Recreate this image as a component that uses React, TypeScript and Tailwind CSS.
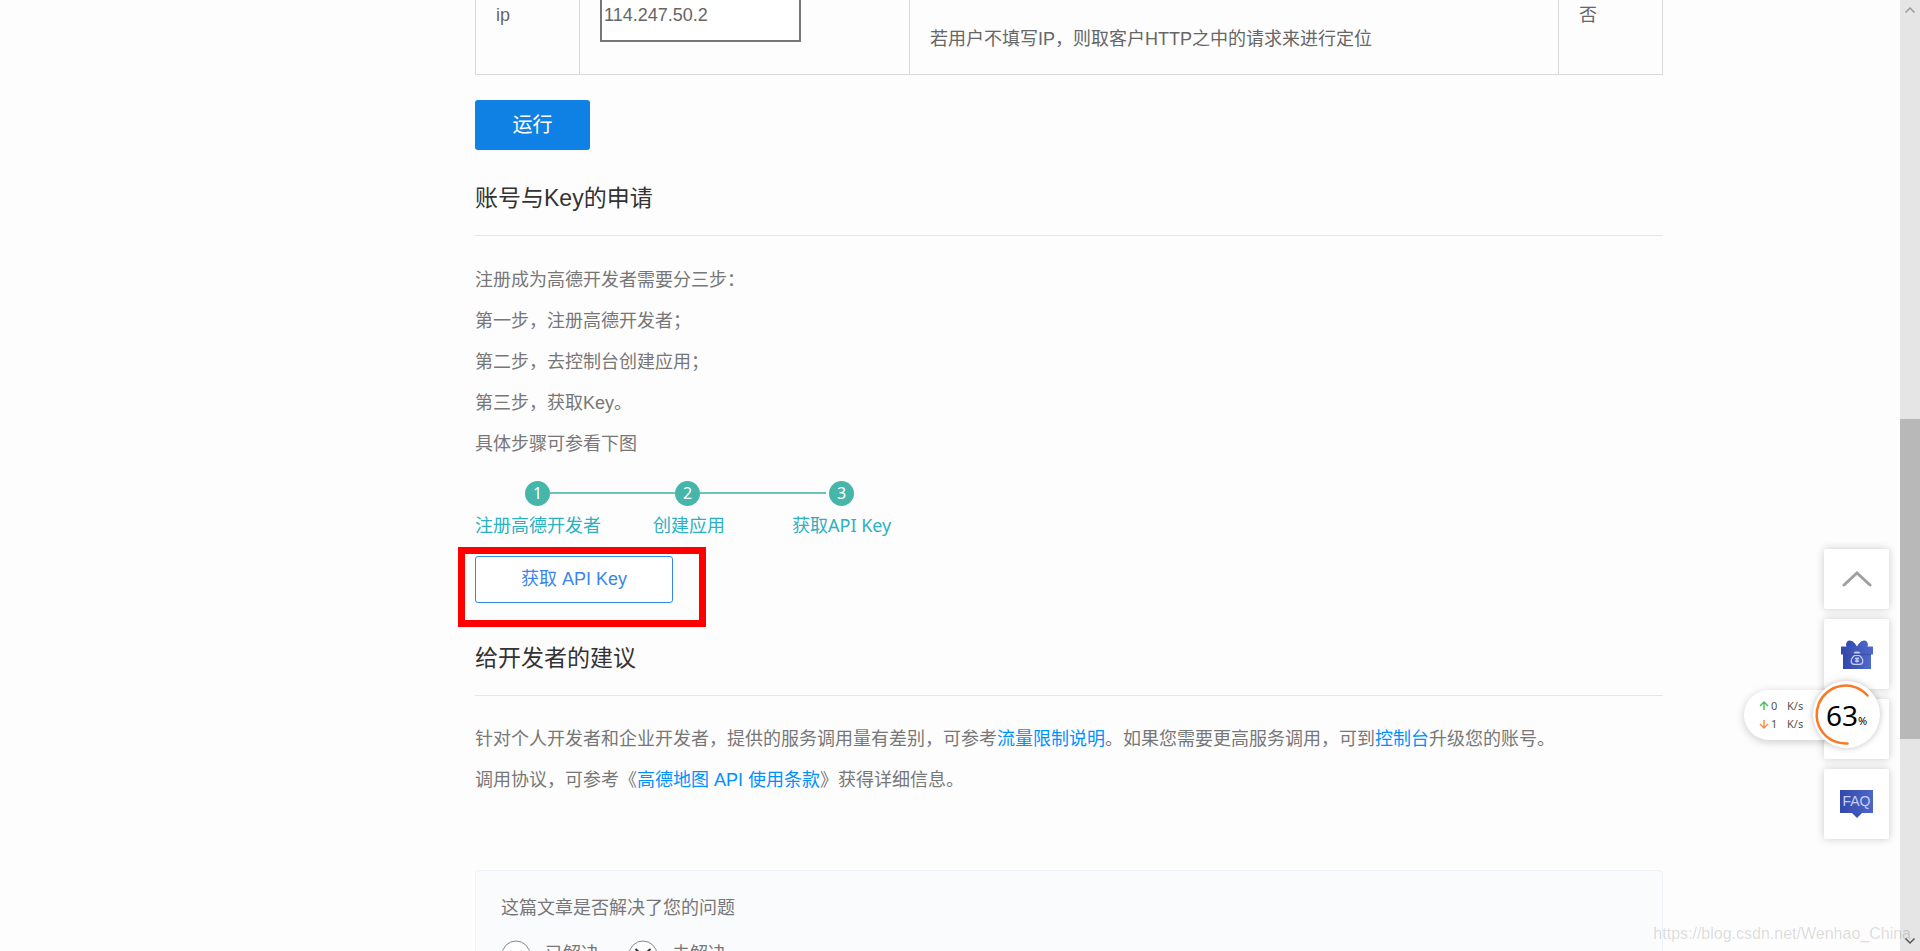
import React from 'react';

const intro = [
  '注册成为高德开发者需要分三步：',
  '第一步，注册高德开发者；',
  '第二步，去控制台创建应用；',
  '第三步，获取Key。',
  '具体步骤可参看下图',
];

const SectionTitle: React.FC<{ children: React.ReactNode }> = ({ children }) => (
  <h2 className="border-b border-[#e6e6e6] pb-5 text-[23px] leading-[34px] text-[#333]">{children}</h2>
);

const StepDot: React.FC<{ n: number }> = ({ n }) => (
  <span className="flex h-[25px] w-[25px] shrink-0 items-center justify-center rounded-full bg-[#46b5aa] text-base leading-none text-white">
    {n}
  </span>
);

const GiftIcon = () => (
  <svg className="h-[29px] w-8" viewBox="0 3 32 29">
    <defs>
      <linearGradient id="gift" x1="0" y1="0" x2="1" y2="0">
        <stop offset="0" stopColor="#3347ac" />
        <stop offset="1" stopColor="#4f69cb" />
      </linearGradient>
    </defs>
    <path
      d="M5 8c0-2.500 1.500-4.500 3.800-4.500 3 0 5.500 3 7.200 6 1.700-3 4.200-6 7.200-6C25.500 3.500 27 5.500 27 8l-1 3H6z"
      fill="url(#gift)"
    />
    <path d="M0 9.500h32v8H0z" fill="url(#gift)" />
    <path d="M2 17.500h28V32H2z" fill="url(#gift)" />
    <path d="M2 17.500h28" stroke="#2d3f9c" strokeWidth="0.8" />
    <path
      d="M13.500 16h5M13.500 18.500h5M13.500 18.500c-2 1.600-3.300 4-3.300 5.800 0 2 1.300 3 3 3h5.600c1.700 0 3-1 3-3 0-1.800-1.300-4.200-3.300-5.800M13 16c.5-1 1.500-1 3-1s2.500 0 3 1"
      fill="none"
      stroke="#c3cdf3"
      strokeWidth="1.200"
    />
    <path d="M16 20.500v5M14 21.500h4M14 24h4" stroke="#c3cdf3" strokeWidth="1.400" />
  </svg>
);

const SpeedRow: React.FC<{ value: number; up?: boolean }> = ({ value, up }) => (
  <div className="flex items-center">
    <svg className="h-[10px] w-[10px]" viewBox="0 0 10 10" fill="none" strokeWidth="1.400">
      {up ? (
        <path d="M5 9V1.500M1 5l4-4 4 4" stroke="#3dc255" />
      ) : (
        <path d="M5 1v7.500M1 5l4 4 4-4" stroke="#fb8b3c" />
      )}
    </svg>
    <span className="ml-[2px] w-4">{value}</span>
    <span>K/s</span>
  </div>
);

export default function App() {
  return (
    <div className="relative flex h-screen overflow-hidden bg-[#fdfdfd] font-['Liberation_Sans','Noto_Sans_CJK_SC',sans-serif] text-[18px] text-[#666]">
      <div className="min-w-0 flex-1 overflow-hidden">
        <div className="mx-auto flex max-w-[1426px]">
          <aside className="w-[238px] shrink-0" />
          <main className="min-w-0 flex-1">
            {/* Parameter table */}
            <table className="w-full table-fixed border-collapse">
              <colgroup>
                <col className="w-[104px]" />
                <col className="w-[330px]" />
                <col />
                <col className="w-[104px]" />
              </colgroup>
              <tbody>
                <tr className="h-[74px] align-top leading-[30px]">
                  <td className="border border-t-0 border-[#d9d9d9] px-5">
                    <label htmlFor="ip">ip</label>
                  </td>
                  <td className="border border-t-0 border-[#d9d9d9] px-5">
                    <input
                      id="ip"
                      defaultValue="114.247.50.2"
                      className="block h-[42px] w-[201px] border-2 border-t-0 border-[#767676] bg-white px-[2px] pb-[10px]"
                    />
                  </td>
                  <td className="border border-t-0 border-[#d9d9d9] px-5 pt-6">
                    若用户不填写IP，则取客户HTTP之中的请求来进行定位
                  </td>
                  <td className="border border-t-0 border-[#d9d9d9] px-5">否</td>
                </tr>
              </tbody>
            </table>

            <button className="mt-[25px] block h-[50px] w-[115px] rounded-[3px] bg-[#0f81e4] text-xl text-white">
              运行
            </button>

            {/* Key application */}
            <section className="mt-[31px]">
              <SectionTitle>账号与Key的申请</SectionTitle>
              <div className="mt-6 leading-[41px] text-[#777]">
                {intro.map((line) => (
                  <p key={line}>{line}</p>
                ))}
              </div>

              <div className="mt-4 font-['Noto_Sans','Noto_Sans_CJK_SC',sans-serif]">
                <div className="flex items-center pl-[50px]">
                  <StepDot n={1} />
                  <span className="h-[2px] w-[125px] bg-[#6cc3ba]" />
                  <StepDot n={2} />
                  <span className="mr-[3px] h-[2px] w-[126px] bg-[#6cc3ba]" />
                  <StepDot n={3} />
                </div>
                <ol className="mt-1 flex leading-[30px] text-[#2bb1c2]">
                  <li className="w-[178px]">注册高德开发者</li>
                  <li className="w-[139px]">创建应用</li>
                  <li>获取API Key</li>
                </ol>
              </div>

              <div className="relative mt-4">
                <button className="block h-[47px] w-[198px] rounded-[3px] border border-[#2f8aec] bg-white text-[#3a85ec]">
                  获取 API Key
                </button>
                <div className="pointer-events-none absolute -top-[9px] -left-[17px] h-20 w-[248px] border-[7px] border-[#ff0000]" />
              </div>
            </section>

            {/* Advice */}
            <section className="mt-[38px]">
              <SectionTitle>给开发者的建议</SectionTitle>
              <div className="mt-[23px] leading-[41px] text-[#777]">
                <p>
                  针对个人开发者和企业开发者，提供的服务调用量有差别，可参考
                  <a href="#limit" className="text-[#0091ff]">流量限制说明</a>
                  。如果您需要更高服务调用，可到
                  <a href="#console" className="text-[#0091ff]">控制台</a>
                  升级您的账号。
                </p>
                <p>
                  调用协议，可参考《
                  <a href="#terms" className="text-[#0091ff]">高德地图 API 使用条款</a>
                  》获得详细信息。
                </p>
              </div>
            </section>

            {/* Feedback */}
            <section className="mt-[69px] rounded-[4px] border border-[#eef3fa] bg-[#fafbfd] px-[25px] pt-[22px] pb-8 text-[#777]">
              <p className="leading-[30px]">这篇文章是否解决了您的问题</p>
              <div className="mt-[17px] flex gap-[29px]">
                <button className="flex items-center gap-[14px]">
                  <svg className="h-[30px] w-[30px]" viewBox="0 0 30 30" fill="none" stroke="#888">
                    <circle cx="15" cy="15" r="14" fill="#fff" />
                    <path d="M8 13c1-2 3-2 4 0M18 13c1-2 3-2 4 0M9 19c3 4 9 4 12 0" stroke="#444" strokeWidth="1.500" />
                  </svg>
                  已解决
                </button>
                <button className="flex items-center gap-[14px]">
                  <svg className="h-[30px] w-[30px]" viewBox="0 0 30 30" fill="none" stroke="#888">
                    <circle cx="15" cy="15" r="14" fill="#fff" />
                    <path d="M7.500 9l5.500 5M22.500 9L17 14M10 21c3-3 7-3 10 0" stroke="#333" strokeWidth="2" />
                  </svg>
                  未解决
                </button>
              </div>
            </section>
          </main>
        </div>
      </div>

      {/* Scrollbar */}
      <div className="flex w-5 shrink-0 flex-col items-center bg-[#e5e5e5]">
        <svg className="h-5 w-5" viewBox="0 0 20 20" fill="none">
          <path d="M5.500 12.500L10 8l4.500 4.500" stroke="#999" strokeWidth="1.500" />
        </svg>
        <div className="h-[399px] shrink-0" />
        <div className="h-[320px] w-full shrink-0 bg-[#b8b8b8]" />
        <svg className="mt-auto h-5 w-5" viewBox="0 0 20 20" fill="none">
          <path d="M5.500 7.500L10 12l4.500-4.500" stroke="#555" strokeWidth="1.500" />
        </svg>
      </div>

      {/* Floating tools */}
      <div className="absolute right-[31px] bottom-[112px] flex w-[65px] flex-col gap-[10px]">
        <button aria-label="返回顶部" className="flex h-[60px] items-center justify-center rounded-[2px] bg-white shadow-[0_0_8px_rgba(0,0,0,0.2)]">
          <svg className="h-4 w-[30px]" viewBox="0 0 30 16" fill="none">
            <path d="M2 14L15 2l13 12" stroke="#a0a0a0" strokeWidth="3" strokeLinecap="round" />
          </svg>
        </button>
        <button className="flex h-[70px] items-center justify-center rounded-[2px] bg-white shadow-[0_0_8px_rgba(0,0,0,0.2)]">
          <GiftIcon />
        </button>
        <button className="h-[60px] rounded-[2px] bg-white shadow-[0_0_8px_rgba(0,0,0,0.2)]" />
        <button className="flex h-[70px] flex-col items-center justify-center rounded-[2px] bg-white shadow-[0_0_8px_rgba(0,0,0,0.2)]">
          <span className="h-[23px] w-[33px] bg-linear-to-r from-[#3448ad] to-[#4c66c8] text-sm leading-[22px] text-[#c9d1f2]">FAQ</span>
          <svg className="h-[5px] w-[10px]" viewBox="0 0 10 5">
            <path d="M0 0h10L5 5z" fill="#3c52b6" />
          </svg>
        </button>
      </div>

      {/* Network monitor */}
      <div className="absolute right-[40px] bottom-[203px] flex items-center font-['Noto_Sans',sans-serif]">
        <div className="-mr-4 flex h-[50px] w-[85px] flex-col justify-center rounded-l-full bg-white pl-[15px] text-[11px] leading-[18px] text-[#555] shadow-[0_2px_8px_rgba(0,0,0,0.2)]">
          <SpeedRow value={0} up />
          <SpeedRow value={1} />
        </div>
        <div className="relative flex h-[67px] w-[67px] items-center justify-center rounded-full bg-white shadow-[0_0_6px_rgba(0,0,0,0.25)]">
          <svg className="absolute inset-0" viewBox="0 0 67 67" fill="none">
            <path d="M54.500 14.500A29 29 0 1 0 34.500 62.500" stroke="#fa7a24" strokeWidth="2.500" strokeLinecap="round" />
          </svg>
          <span className="text-[28px] leading-none text-black">63</span>
          <span className="mt-3 text-[11px] leading-none text-black">%</span>
        </div>
      </div>

      <span className="absolute right-[9px] bottom-[7px] text-base leading-5 text-black/15">
        https://blog.csdn.net/Wenhao_China
      </span>
    </div>
  );
}
